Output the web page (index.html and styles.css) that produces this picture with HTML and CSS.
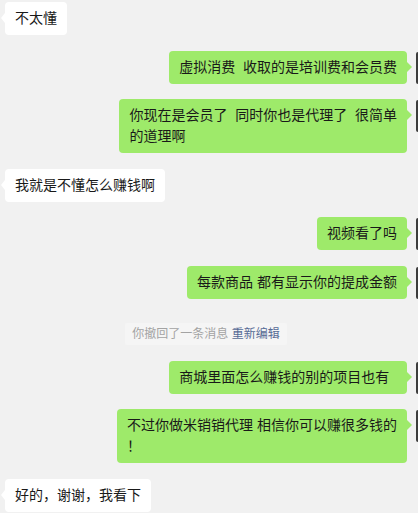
FILE: index.html
```html
<!DOCTYPE html>
<html lang="zh-CN">
<head>
    <meta charset="UTF-8">
    <meta name="viewport" content="width=device-width, initial-scale=1.0">
    <title>聊天记录</title>
    <link rel="stylesheet" href="styles.css">
</head>
<body>
    <div class="chat">
        <div class="msg">
            <div class="bubble">不太懂</div>
        </div>
        <div class="msg me">
            <div class="bubble">虚拟消费&nbsp;&nbsp;收取的是培训费和会员费</div>
            <div class="avatar"></div>
        </div>
        <div class="msg me">
            <div class="bubble">你现在是会员了&nbsp;&nbsp;同时你也是代理了&nbsp;&nbsp;很简单<br>的道理啊</div>
            <div class="avatar"></div>
        </div>
        <div class="msg">
            <div class="bubble">我就是不懂怎么赚钱啊</div>
        </div>
        <div class="msg me">
            <div class="bubble">视频看了吗</div>
            <div class="avatar"></div>
        </div>
        <div class="msg me">
            <div class="bubble">每款商品 都有显示你的提成金额</div>
            <div class="avatar"></div>
        </div>
        <div class="notice">
            <span class="notice-text">你撤回了一条消息 <a class="notice-link">重新编辑</a></span>
        </div>
        <div class="msg me">
            <div class="bubble">商城里面怎么赚钱的别的项目也有&nbsp;&nbsp;</div>
            <div class="avatar"></div>
        </div>
        <div class="msg me">
            <div class="bubble">不过你做米销销代理 相信你可以赚很多钱的<br>！</div>
            <div class="avatar"></div>
        </div>
        <div class="msg">
            <div class="bubble">好的，谢谢，我看下</div>
        </div>
    </div>
</body>
</html>
```

FILE: styles.css
```css
html, body {
    margin: 0;
    padding: 0;
    background-color: #f1f1f1;
}

body {
    font-family: "Liberation Sans", "Noto Sans CJK SC", sans-serif;
    color: #191919;
}

.chat {
    display: flex;
    flex-direction: column;
    gap: 15.5px;
    padding: 2px 0 0 5px;
}

.msg {
    display: flex;
    align-items: flex-start;
}

.msg.me {
    justify-content: flex-end;
}

.bubble {
    position: relative;
    box-sizing: border-box;
    max-width: 292px;
    padding: 6px 10px;
    font-size: 14px;
    line-height: 21px;
    background: white;
    border-radius: 4px;
    white-space: nowrap;
}

.bubble::after {
    content: "";
    position: absolute;
    top: 11px;
    left: -4px;
    border-top: 5px solid transparent;
    border-bottom: 5px solid transparent;
    border-right: 4px solid white;
}

.me .bubble {
    background: #9eea6a;
}

.me .bubble::after {
    left: auto;
    right: -5px;
    border-right: none;
    border-left: 5px solid #9eea6a;
}

/* avatar is cut off by the right edge, only a sliver shows */
.avatar {
    flex-shrink: 0;
    width: 2px;
    height: 32px;
    margin: 1px 0 0 9px;
    border-radius: 3px 0 0 3px;
    background: #3d3d3d;
}

.notice {
    display: flex;
    justify-content: center;
    margin-top: 9px;
    padding-right: 11px;
}

.notice-text {
    padding: 3px 7px;
    font-size: 12px;
    line-height: 16px;
    color: #a3a3a3;
    background: #f5f5f5;
    border-radius: 2px;
}

.notice-link {
    color: #576b95;
}
```
